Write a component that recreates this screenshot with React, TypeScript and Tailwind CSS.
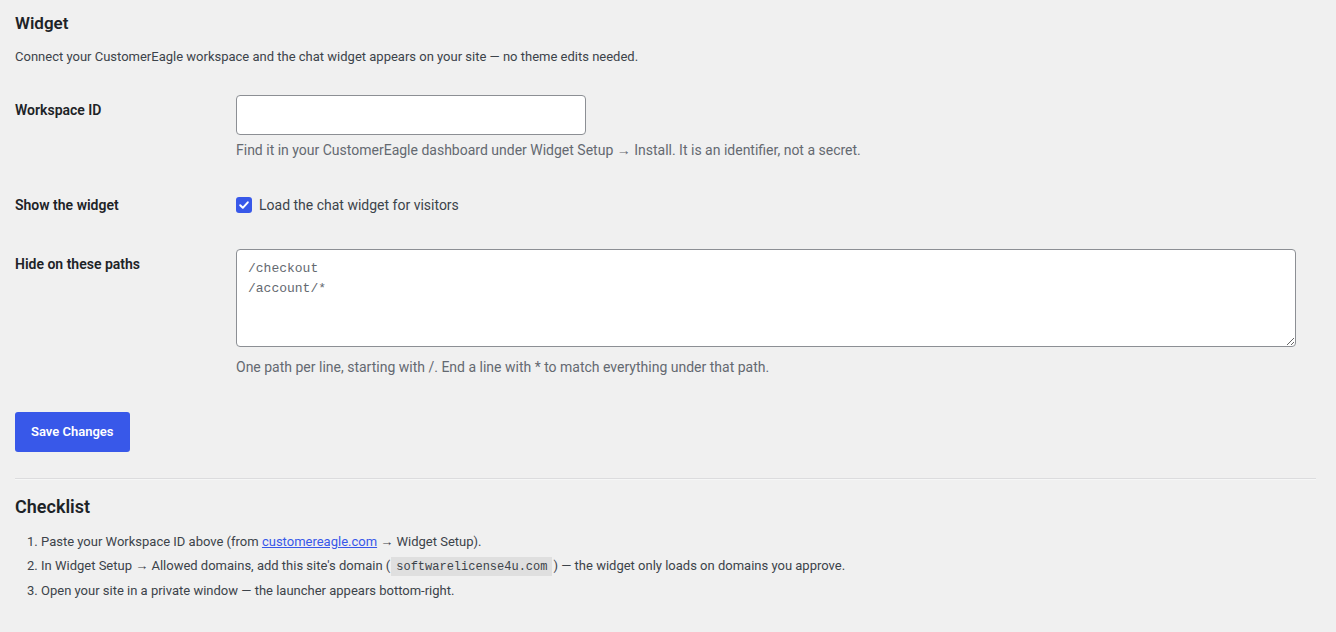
import React from 'react';

const font = { fontFamily: 'Roboto, "Liberation Sans", sans-serif' };

const Row = ({ label, children }: { label: string; children: React.ReactNode }) => (
  <div className="flex">
    <div className="w-[221px] shrink-0 text-[14px] font-semibold leading-[18px] text-[#1d2327]">{label}</div>
    <div className="flex-1">{children}</div>
  </div>
);

export default function App() {
  return (
    <div style={font} className="min-h-[632px] bg-[#f0f0f0] pl-[15px] pr-[20px] text-[13px] text-[#3c434a]">
      <h1 className="pt-[12px] text-[17px] font-semibold leading-[22px] text-[#1d2327]">Widget</h1>
      <p className="mt-[14px] leading-[18px]">
        Connect your CustomerEagle workspace and the chat widget appears on your site — no theme edits needed.
      </p>

      <div className="mt-[35px]">
        <Row label="Workspace ID">
          <div className="-mt-[6px]">
            <input className="block h-[40px] w-[350px] rounded-[4px] border border-[#8c8f94] bg-white px-2 outline-none" />
            <p className="mt-[5px] text-[14px] leading-[20px] text-[#646970]">
              Find it in your CustomerEagle dashboard under Widget Setup → Install. It is an identifier, not a secret.
            </p>
          </div>
        </Row>
      </div>

      <div className="mt-[36px]">
        <Row label="Show the widget">
          <label className="flex items-center gap-[7px] text-[14px] leading-[18px]">
            <span className="flex h-[16px] w-[16px] items-center justify-center rounded-[3px] bg-[#3858e9]">
              <svg width="12" height="12" viewBox="0 0 12 12" fill="none">
                <path d="M2.2 6.3 4.8 8.8 9.8 3.3" stroke="white" strokeWidth="2" strokeLinecap="round" strokeLinejoin="round" />
              </svg>
            </span>
            <span>Load the chat widget for visitors</span>
          </label>
        </Row>
      </div>

      <div className="mt-[41px]">
        <Row label="Hide on these paths">
          <div className="-mt-[6px]">
            <textarea
              className="block h-[98px] w-[1060px] resize-y rounded-[4px] border border-[#8c8f94] bg-white px-[11px] pb-[6px] pt-[9px] text-[13px] leading-[20px] text-[#646970] outline-none"
              style={{ fontFamily: '"Liberation Mono", monospace' }}
              defaultValue={'/checkout\n/account/*'}
            />
            <p className="mt-[10px] text-[14px] leading-[20px] text-[#646970]">
              One path per line, starting with /. End a line with * to match everything under that path.
            </p>
          </div>
        </Row>
      </div>

      <button className="mt-[35px] h-[40px] rounded-[3px] bg-[#3858e9] px-[16px] text-[13px] font-semibold text-white">
        Save Changes
      </button>

      <hr className="mt-[26px] border-0 border-t border-b border-t-[#dcdcde] border-b-[#f6f7f7]" />

      <h2 className="mt-[15px] text-[18px] font-semibold leading-[24px] text-[#1d2327]">Checklist</h2>

      <ol className="ml-[26px] mt-[14px] list-decimal space-y-[6px] leading-[18px]">
        <li>
          Paste your Workspace ID above (from{' '}
          <a href="#" className="text-[#3858e9] underline">customereagle.com</a> → Widget Setup).
        </li>
        <li>
          In Widget Setup → Allowed domains, add this site's domain (
          <code
            className="mx-[1px] bg-[rgba(0,0,0,0.07)] px-[5px] pb-[2px] pt-[3px] text-[12px]"
            style={{ fontFamily: '"Liberation Mono", monospace' }}
          >
            softwarelicense4u.com
          </code>
          ) — the widget only loads on domains you approve.
        </li>
        <li>Open your site in a private window — the launcher appears bottom-right.</li>
      </ol>
    </div>
  );
}
